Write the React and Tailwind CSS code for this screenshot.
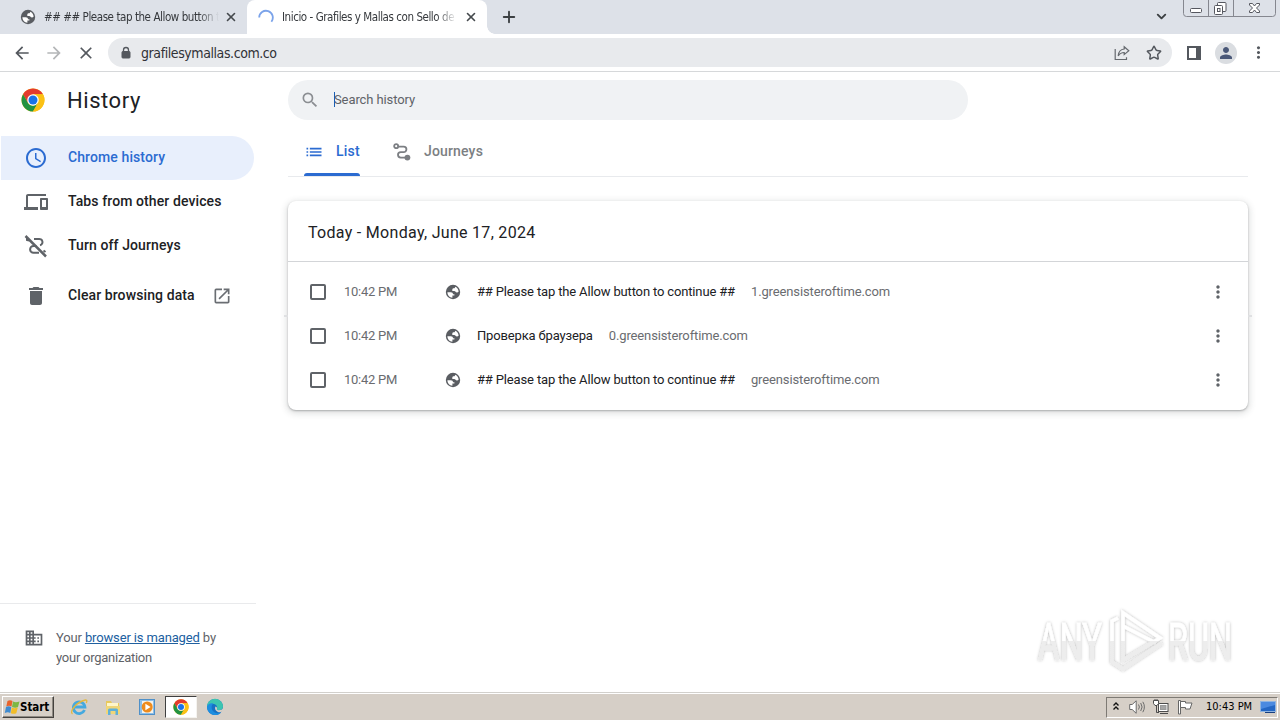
import React from 'react';
import { X, Plus, ChevronDown, Star } from 'lucide-react';
import {
    MdArrowBack,
    MdArrowForward,
    MdClose,
    MdSearch,
    MdMoreVert,
    MdPerson,
    MdList,
    MdDelete,
    MdOpenInNew,
    MdBusiness,
    MdDevices,
    MdSchedule
} from 'react-icons/md';

const historyItems = [
    { time: '10:42 PM', title: '## Please tap the Allow button to continue ##', domain: '1.greensisteroftime.com' },
    { time: '10:42 PM', title: 'Проверка браузера', domain: '0.greensisteroftime.com' },
    { time: '10:42 PM', title: '## Please tap the Allow button to continue ##', domain: 'greensisteroftime.com' }
];

const GlobeIcon = ({ className }) => (
    <svg viewBox="0 0 16 16" className={className}>
        <circle cx="8" cy="8" r="7.200" fill="#5a5d62" />
        <path d="M2.400 8.300h3.300c1.700 0 2.300.8 2.300 1.900h1.400v1.400H7.400v2.100C4.500 13.500 2.400 11.300 2.400 8.300Z" fill="#fff" />
        <path d="M10.200 2.800c2.100.9 3.400 2.700 3.400 5-.8.5-1.500.8-2.300.4-.9-.3-1-1.200-2-1.200H7.300V5.500c0-.8.8-1.200 1.700-1.200.7 0 1.200-.6 1.200-1.500Z" fill="#fff" />
    </svg>
);

const ChromeIcon = ({ className }) => (
    <svg viewBox="0 0 48 48" className={className}>
        <circle cx="24" cy="24" r="23" fill="#fbc116" />
        <path d="M4.100 12.500A23 23 0 0 1 43.900 12.500H24L14 29.800Z" fill="#e33b2e" />
        <path d="M4.100 12.500 14 29.800A11.500 11.500 0 0 0 34 29.700L24 47A23 23 0 0 1 4.100 12.500Z" fill="#229342" />
        <path d="M34 29.700 24 47A23 23 0 0 0 43.900 12.500H24Z" fill="#fbc116" />
        <circle cx="24" cy="24" r="11.500" fill="#fff" />
        <circle cx="24" cy="24" r="9" fill="#1a73e8" />
    </svg>
);

const JourneysIcon = ({ className }) => (
    <svg viewBox="0 0 24 24" className={className} fill="none" stroke="currentColor" strokeWidth="2.200">
        <circle cx="5" cy="5" r="2.400" />
        <path d="M7.500 5.500H14a3.300 3.300 0 0 1 0 6.600h-3.500a3.300 3.300 0 0 0 0 6.600H16" />
        <circle cx="18.500" cy="18.700" r="3.500" fill="currentColor" stroke="none" />
    </svg>
);

const JourneysOffIcon = ({ className }) => (
    <svg viewBox="0 0 24 24" className={className} fill="none" stroke="currentColor" strokeWidth="2">
        <path d="M10 5h4.500a3.200 3.200 0 0 1 1.500 6.300M12.500 12H9.500a3.300 3.300 0 0 0 0 6.800H15M3 3v3l2 .5M19.500 16.500l2 1.500" />
        <path d="M1.500 2 22 22.500" strokeWidth="2.500" />
    </svg>
);

const ShareIcon = ({ className }) => (
    <svg viewBox="0 0 16 16" className={className} fill="none" stroke="#65696e" strokeWidth="1.200">
        <path d="M1.200 4v10.500h11.300v-2.300" />
        <path d="M10.200 1.800 14.800 5.800 10.200 9.600V7.500C7.500 7.500 5.700 8.500 4.200 10.800 4.500 7 6.700 4.400 10.200 4Z" />
    </svg>
);

const LockIcon = ({ className }) => (
    <svg viewBox="0 0 12 14" className={className} fill="none" stroke="#54585e">
        <rect x="2" y="5.500" width="8" height="6.500" rx=".8" fill="#54585e" />
        <path d="M3.500 5.500V4a2.500 2.500 0 0 1 5 0v1.500" strokeWidth="1.300" />
    </svg>
);

const Tab = ({ children, active, width, icon, maxClass }) => (
    <div className={`relative flex items-center h-[34px] ${width} ${active ? 'bg-white rounded-t-[8px]' : ''}`}>
        {icon}
        <span className={`ml-2 mt-[2px] ${maxClass} overflow-hidden whitespace-nowrap font-['DejaVu_Sans_Condensed','DejaVu_Sans',sans-serif] text-[11.5px] tracking-[-0.44px] text-[#35383c] [mask-image:linear-gradient(to_right,black_88%,transparent)]`}>
            {children}
        </span>
        <X size={14} strokeWidth={2.800} className="absolute right-[9px] top-[10px] text-[#45494d]" />
    </div>
);

const WindowControls = () => (
    <svg width="94" height="17" viewBox="0 0 94 17" className="ml-[14px]" fill="none" stroke="#85878f">
        <path d="M.5 0v13.500a3 3 0 0 0 3 3h86a3 3 0 0 0 3-3V0M25.500 0v16M50.500 0v16" />
        <rect x="7.500" y="8.500" width="11" height="4" rx="1" fill="#fff" stroke="#55575f" />
        <rect x="34.500" y="2.500" width="8.500" height="9" rx="1" fill="#fff" stroke="#55575f" />
        <rect x="31.500" y="5.500" width="8" height="9" rx="1" fill="#fff" stroke="#55575f" />
        <rect x="34.500" y="8.500" width="2.500" height="3" stroke="#55575f" />
        <path d="M66.500 3.500h3l2 2.500 2-2.500h3v1.500L73.500 8l3 3v1.500h-3l-2-2.500-2 2.500h-3V11l3-3-3-3Z" fill="#fff" stroke="#55575f" />
    </svg>
);

const TabStrip = () => (
    <div className="flex h-[34px] bg-[#dde1e8]">
        <Tab
            width="w-[247px] pl-5"
            maxClass="w-[175px]"
            icon={<GlobeIcon className="w-4 h-4 shrink-0" />}
        >
            ## ## Please tap the Allow button to continue ##
        </Tab>
        <Tab
            active
            width="w-[240px] pl-[11px]"
            maxClass="w-[175px]"
            icon={
                <svg viewBox="0 0 16 16" className="w-4 h-4 shrink-0" fill="none">
                    <path d="M1.200 8.500A6.800 6.800 0 1 1 13.400 12.700" stroke="#7ba3ea" strokeWidth="1.800" />
                </svg>
            }
        >
            Inicio - Grafiles y Mallas con Sello de Calidad
        </Tab>
        <div className="relative flex items-center pl-[13px] flex-1">
            <div className="absolute left-0 bottom-0 w-2 h-2 bg-[radial-gradient(circle_at_100%_0,transparent_7.5px,white_8px)]" />
            <Plus size={18} strokeWidth={2.500} className="text-[#3c4043]" />
        </div>
        <div className="flex items-start">
            <ChevronDown size={15} strokeWidth={3} className="mt-[9px] text-[#3c4043]" />
            <WindowControls />
            <div className="w-[3px]" />
        </div>
    </div>
);

const Toolbar = () => (
    <div className="flex items-center h-[38px] bg-white border-b border-[#d6d8da] pl-3 text-[#54585e]">
        <MdArrowBack size={20} />
        <MdArrowForward size={20} className="ml-3 text-[#b4b6b8]" />
        <MdClose size={20} className="ml-3" />
        <div className="ml-3 flex items-center w-[1064px] h-[29px] rounded-full bg-[#e8eaed] pl-3 pr-[10px]">
            <LockIcon className="w-3 h-[14px]" />
            <span className="ml-[9px] mt-px font-['DejaVu_Sans_Condensed','DejaVu_Sans',sans-serif] text-[14px] tracking-[-0.42px] text-[#303236]">
                grafilesymallas.com.co
            </span>
            <ShareIcon className="ml-auto w-4 h-4" />
            <Star size={16} strokeWidth={2.200} className="ml-4" />
        </div>
        <div className="ml-[15px] w-[14px] h-[14px] border-2 border-r-[5px] border-[#54585e]" />
        <div className="ml-[14px] w-[22px] h-[22px] rounded-full bg-[#dadde1] flex items-center justify-center text-[#4a5878]">
            <MdPerson size={18} />
        </div>
        <MdMoreVert size={19} className="ml-[12px]" />
    </div>
);

const NavItem = ({ icon, label, active, trailing, className = '' }) => (
    <div className={`flex items-center h-[44px] text-[14px] font-medium tracking-[0.1px] ${active ? 'pl-[23px] w-[253px] ml-px bg-[#e8effc] rounded-r-full text-[#2b6bd1]' : 'w-[254px] pl-6 text-[#202124]'} ${className}`}>
        <span className={`w-6 flex shrink-0 justify-center ${active ? '' : 'text-[#5f6368]'}`}>{icon}</span>
        <span className="ml-5 relative -top-px whitespace-nowrap">{label}</span>
        {trailing}
    </div>
);

const Sidebar = () => (
    <div className="w-[256px] flex flex-col shrink-0">
        <div className="h-[64px] flex items-center pl-[21px] pb-2">
            <ChromeIcon className="w-6 h-6" />
            <h1 className="ml-[22px] text-[22px] tracking-[0.55px] text-[#202124] font-[450]">History</h1>
        </div>
        <NavItem active icon={<MdSchedule size={24} />} label="Chrome history" />
        <NavItem icon={<MdDevices size={24} />} label="Tabs from other devices" />
        <NavItem icon={<JourneysOffIcon className="w-6 h-6" />} label="Turn off Journeys" />
        <NavItem
            className="mt-[6px]"
            icon={<MdDelete size={24} />}
            label="Clear browsing data"
            trailing={<MdOpenInNew size={20} className="ml-[17px] text-[#6a6e73]" />}
        />
        <div className="mt-auto h-[89px] border-t border-[#e9eaec] flex pl-6 pt-6 text-[13px] leading-5 tracking-[-0.14px] text-[#5f6368]">
            <MdBusiness size={20} className="shrink-0" />
            <p className="ml-3 whitespace-nowrap">
                Your <a className="text-[#20609f] underline">browser is managed</a> by
                <br />
                <span className="tracking-[-0.25px]">your organization</span>
            </p>
        </div>
    </div>
);

const HistoryRow = ({ item }) => (
    <div className="flex items-center h-[44px] pl-[22px] pr-5 text-[13px]">
        <div className="w-4 h-4 border-2 border-[#5f6368] rounded-[2px]" />
        <span className="ml-[18px] w-[101px] tracking-[-0.27px] text-[#6a6c70]">{item.time}</span>
        <GlobeIcon className="w-4 h-4" />
        <span className="ml-4 tracking-[-0.15px] text-[#202124]">{item.title}</span>
        <span className="ml-4 tracking-[-0.13px] text-[#6a6c70]">{item.domain}</span>
        <MdMoreVert size={20} className="ml-auto text-[#5f6368]" />
    </div>
);

const HistoryMain = () => (
    <div className="ml-8 w-[960px]">
        <div className="relative mt-2 w-[680px] h-10 rounded-full bg-[#f0f2f4] flex items-center pl-3">
            <MdSearch size={20} className="text-[#8b8e92]" />
            <span className="ml-[14px] text-[13px] tracking-[-0.1px] text-[#5f6368]">Search history</span>
            <span className="absolute left-[46px] top-[12px] h-[15px] w-px bg-[#1a5fb4]" />
        </div>
        <div className="h-[57px] border-b border-[#e8eaed] flex pl-4 text-[14px] font-medium">
            <div className="relative w-14 flex items-center pt-2 text-[#2b6bd1] tracking-[0.2px]">
                <MdList size={20} />
                <span className="ml-3 relative -top-px">List</span>
                <div className="absolute bottom-0 left-0 w-14 h-[3px] rounded-t-[3px] bg-[#2b6bd1]" />
            </div>
            <div className="ml-8 flex items-center pt-2 text-[#7c7f83] tracking-[0.16px]">
                <JourneysIcon className="w-5 h-5" />
                <span className="ml-3 relative -top-px">Journeys</span>
            </div>
        </div>
        <div className="relative mt-6 h-[209px] bg-white rounded-[8px] shadow-[0_1px_2px_0_rgba(60,64,67,0.35),0_2px_6px_2px_rgba(60,64,67,0.15)]">
            <div className="h-[61px] flex items-center pl-5 pt-[3px] border-b border-[#d3d5d8] text-[16px] tracking-[0.3px] text-[#202124]">
                <span>Today - Monday, June 17, 2024</span>
            </div>
            <div className="pt-2">
                {historyItems.map((item, i) => (
                    <HistoryRow key={i} item={item} />
                ))}
            </div>
            <div className="absolute -left-1 top-[114px] w-1 h-[2px] bg-[#dfe0e2]" />
            <div className="absolute -right-1 top-[114px] w-1 h-[2px] bg-[#dfe0e2]" />
        </div>
    </div>
);

const Watermark = () => (
    <svg width="210" height="76" viewBox="0 0 210 76" className="absolute left-[1030px] top-[604px]">
        <defs>
            <linearGradient id="wm" x1="0" y1="0" x2="0" y2="74" gradientUnits="userSpaceOnUse">
                <stop offset="0.5" stopColor="#ffffff" />
                <stop offset="0.5" stopColor="#ededed" />
            </linearGradient>
            <filter id="wmShadow" x="-10%" y="-15%" width="120%" height="130%">
                <feDropShadow dx="0" dy="0" stdDeviation="1.600" floodColor="#000" floodOpacity="0.3" />
            </filter>
        </defs>
        <g filter="url(#wmShadow)" fill="url(#wm)" stroke="url(#wm)" strokeWidth=".6" className="font-['Roboto',sans-serif] text-[51px]">
            <text x="8" y="56" textLength="64" lengthAdjust="spacingAndGlyphs">ANY</text>
            <text x="138" y="56" textLength="64" lengthAdjust="spacingAndGlyphs">RUN</text>
        </g>
        <g filter="url(#wmShadow)" fill="none" stroke="url(#wm)" strokeWidth="3.600">
            <path d="M88 14 82 17V58l11 7 39-26" />
            <path d="M93 9v47l37-22Z" />
            <path d="M93 22 126 39" />
        </g>
    </svg>
);

const TaskIcon = ({ children, active }) => (
    <div className={`flex items-center justify-center h-[22px] w-[32px] ${active ? 'bg-white border border-t-[#404040] border-l-[#404040] border-[#f5f3ef]' : ''}`}>
        {children}
    </div>
);

const IeIcon = () => (
    <svg viewBox="0 0 18 18" className="w-[18px] h-[18px]" fill="none">
        <path d="M14.500 12a5.800 5.800 0 1 1 .4-3H5" stroke="#45a9df" strokeWidth="2.800" />
        <path d="M2.500 16C-1 14 6 4 15.500 2c2-.2 1.300 2 .8 3" stroke="#e4b83c" strokeWidth="1.300" />
    </svg>
);

const FolderIcon = () => (
    <svg viewBox="0 0 18 18" className="w-[18px] h-[18px]">
        <path d="M2 3h5l1 2h7v10H2Z" fill="#e8c95c" />
        <path d="M3 5h11v4H3Z" fill="#fff6c9" />
        <path d="M2 8h14v8H2Z" fill="#f0d678" />
        <path d="M4 17v-5q0-1.500 1.500-1.500h7q1.500 0 1.500 1.500v5h-2.500v-4h-5v4Z" fill="#5fb0d8" />
    </svg>
);

const PlayerIcon = () => (
    <svg viewBox="0 0 16 16" className="w-4 h-4">
        <rect x=".5" y=".5" width="15" height="15" fill="#8dbfe8" stroke="#4f90c8" />
        <rect x="3" y="2" width="11" height="12" fill="#f5f2ea" />
        <circle cx="8.200" cy="8" r="5.500" fill="#ee8b1c" />
        <path d="m6.400 4.800 5.200 3.200-5.200 3.200Z" fill="#fff" />
    </svg>
);

const EdgeIcon = () => (
    <svg viewBox="0 0 18 18" className="w-[18px] h-[18px]">
        <circle cx="9" cy="9" r="8" fill="#1671c4" />
        <path d="M1 9a8 8 0 0 1 16-.5c0 2.700-2 3.700-4.200 3.700-1.700 0-2.300-.7-1.800-1.600C11.800 8 9.500 6 7 6 4 6 1.500 7.500 1 9Z" fill="#3cc5b0" />
        <path d="M1 9c.5-3 3.500-4.500 6.500-3.500C5 7 5 11 7.500 13.500c2 2 5 2 7.500.9C11 19.500 1.300 17 1 9Z" fill="#1d8ee0" />
        <path d="M11 10.500c-.5 1 .1 1.700 1.800 1.700 2 0 3.400-.4 4-1.700h1.200v3h-2c-1 1-3 1-4.500.2C9 12.500 8.500 10 9.500 8.500c.9 0 1.700 1 1.500 2Z" fill="#d6cfc6" />
    </svg>
);

const StartFlag = () => (
    <svg viewBox="0 0 16 16" className="w-4 h-4 shrink-0">
        <path d="M3.500 2q2.500-1.700 5 0L7.500 7.500q-2.500-1.500-5.200 0Z" fill="#e8632b" />
        <path d="M9 2.500q2.500 1.500 6.500 0L14 8q-2.500 1.300-6 0Z" fill="#7db742" />
        <path d="M2 8q2.500-1.500 5.300 0l-1 6q-2.500-1.500-5.500 0Z" fill="#3f8bd0" />
        <path d="M7.800 8.500q2.500 1.500 6 0l-1.500 5.700q-2.500 1.300-5.500 0Z" fill="#f2bd29" />
    </svg>
);

const Tray = () => (
    <div className="mr-[2px] flex items-center w-[172px] h-[21px] border border-t-[#7e7a74] border-l-[#7e7a74] border-r-white border-b-white pl-[5px]">
        <svg viewBox="0 0 8 10" className="w-[8px] h-[10px] relative -top-px" fill="none" stroke="#111" strokeWidth="1.400">
            <path d="m1.500 4.500 2.500-2.500 2.500 2.500M1.500 8.500 4 6l2.500 2.500" />
        </svg>
        <svg viewBox="0 0 16 14" className="ml-[9px] w-4 h-[14px]" fill="none" stroke="#6c6c6c">
            <path d="M.7 4.500h2.500l4-3.700v12.500l-4-3.800H.7Z" fill="#fff" />
            <path d="M9.500 4.500q1.800 2.500 0 5M11.700 3q2.800 4 0 8M13.800 1.800q3.200 5 0 10.400" />
        </svg>
        <svg viewBox="0 0 16 16" className="ml-[8px] w-4 h-4" stroke="#4c4c4c">
            <rect x="5.500" y="4.500" width="9.500" height="8" fill="#fff" />
            <rect x="7.500" y="6.500" width="5.500" height="4" fill="#a5a5a5" stroke="#999" />
            <path d="M7 14.500h8M3.500 7v6.500H6" fill="none" />
            <path d="M.5 1.500h5v3L4 6.500H2L.5 4.500ZM2 0v1.500M4 0v1.500" fill="#fff" />
        </svg>
        <svg viewBox="0 0 16 16" className="ml-[8px] w-4 h-4" stroke="#666">
            <path d="M1.500 1.500h2v13.500h-2Z" fill="#fff" />
            <path d="M3.500 2.500h5v1.500h6.500l-2 6H8.500V8.500h-5Z" fill="#fff" />
        </svg>
        <span className="ml-[13px] mt-px whitespace-nowrap font-['DejaVu_Sans_Condensed','DejaVu_Sans',sans-serif] text-[11px] text-black">10:43 PM</span>
        <svg viewBox="0 0 16 14" className="ml-[8px] w-4 h-[14px] shrink-0">
            <rect x=".5" y="1.500" width="15" height="10" fill="#2467c4" stroke="#8fb4e0" />
            <path d="M1 2h14v3L1 9Z" fill="#4b8ae0" />
            <path d="M5 12.500h10" stroke="#173f80" />
        </svg>
    </div>
);

const Taskbar = () => (
    <div className="h-[28px] bg-[#d6cfc7] border-t border-[#d2d0cc] shadow-[inset_0_1px_0_#fff] flex items-center pt-px">
        <div className="ml-[2px] w-[52px] h-[22px] flex items-center pl-px bg-[#d6cfc7] border border-t-white border-l-white border-r-[#45423e] border-b-[#45423e] shadow-[inset_-1px_-1px_0_#8f8a83]">
            <StartFlag />
            <span className="mt-[2px] font-['DejaVu_Sans_Condensed','DejaVu_Sans',sans-serif] text-[11.5px] font-bold tracking-[-0.05px] text-black">Start</span>
        </div>
        <div className="ml-[9px] flex items-center gap-[2px] flex-1">
            <TaskIcon><IeIcon /></TaskIcon>
            <TaskIcon><FolderIcon /></TaskIcon>
            <TaskIcon><PlayerIcon /></TaskIcon>
            <TaskIcon active><ChromeIcon className="w-4 h-4" /></TaskIcon>
            <TaskIcon><EdgeIcon /></TaskIcon>
        </div>
        <Tray />
    </div>
);

export default function App() {
    return (
        <div className="relative w-[1280px] h-[720px] overflow-hidden bg-white flex flex-col font-['Roboto',sans-serif]">
            <TabStrip />
            <Toolbar />
            <div className="flex flex-1 min-h-0">
                <Sidebar />
                <HistoryMain />
            </div>
            <Taskbar />
            <Watermark />
        </div>
    );
}
